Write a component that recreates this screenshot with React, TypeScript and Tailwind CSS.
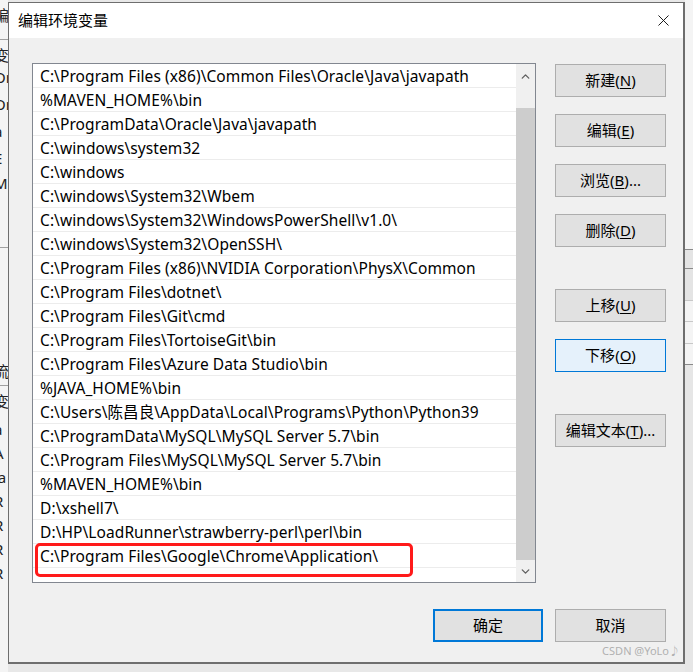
import { ChevronDown, ChevronUp, X } from "lucide-react"

const paths = [
  "C:\\Program Files (x86)\\Common Files\\Oracle\\Java\\javapath",
  "%MAVEN_HOME%\\bin",
  "C:\\ProgramData\\Oracle\\Java\\javapath",
  "C:\\windows\\system32",
  "C:\\windows",
  "C:\\windows\\System32\\Wbem",
  "C:\\windows\\System32\\WindowsPowerShell\\v1.0\\",
  "C:\\windows\\System32\\OpenSSH\\",
  "C:\\Program Files (x86)\\NVIDIA Corporation\\PhysX\\Common",
  "C:\\Program Files\\dotnet\\",
  "C:\\Program Files\\Git\\cmd",
  "C:\\Program Files\\TortoiseGit\\bin",
  "C:\\Program Files\\Azure Data Studio\\bin",
  "%JAVA_HOME%\\bin",
  "C:\\Users\\陈昌良\\AppData\\Local\\Programs\\Python\\Python39",
  "C:\\ProgramData\\MySQL\\MySQL Server 5.7\\bin",
  "C:\\Program Files\\MySQL\\MySQL Server 5.7\\bin",
  "%MAVEN_HOME%\\bin",
  "D:\\xshell7\\",
  "D:\\HP\\LoadRunner\\strawberry-perl\\perl\\bin",
  "C:\\Program Files\\Google\\Chrome\\Application\\",
]

// bits of the window behind the dialog, cut off at the left edge
const behind = [
  { h: "h-[40px]", t: "编", line: true },
  { h: "h-[22px]", t: "变", line: false },
  { h: "h-[27px]", t: "Or", line: false },
  { h: "h-[27px]", t: "Or", line: false },
  { h: "h-[27px]", t: "a", line: false },
  { h: "h-[25px]", t: "E", line: false },
  { h: "h-[80px]", t: "M", line: true },
  { h: "h-[108px]", t: "", line: false },
  { h: "h-[30px]", t: "流", line: true },
  { h: "h-[28px]", t: "变", line: false },
  { h: "h-[24px]", t: "a", line: false },
  { h: "h-[24px]", t: "A", line: false },
  { h: "h-[24px]", t: "la", line: false },
  { h: "h-[24px]", t: "R", line: false },
  { h: "h-[24px]", t: "R", line: false },
  { h: "h-[24px]", t: "R", line: false },
  { h: "h-[24px]", t: "R", line: false },
]

function Btn({ label, k, rest, focus }: { label: string; k: string; rest?: string; focus?: boolean }) {
  return (
    <div
      className={`w-[111px] h-[33px] flex items-center justify-center text-[15px] text-black border ${
        focus ? "bg-[#e5f1fb] border-[#0078d7]" : "bg-[#e1e1e1] border-[#adadad]"
      }`}
    >
      {label}(<span className="underline underline-offset-2">{k}</span>){rest}
    </div>
  )
}

export default function App() {
  return (
    <div
      className="w-[693px] h-[672px] bg-[#e8e8e8] flex overflow-hidden"
      style={{ fontFamily: '"Noto Sans", "Noto Sans CJK SC", sans-serif' }}
    >
      {/* window behind, left */}
      <div className="w-[8px] shrink-0 bg-[#f4f4f4] overflow-hidden flex flex-col text-[15px] text-[#222] leading-none">
        {behind.map((b, i) => (
          <div key={i} className={`${b.h} shrink-0 flex items-start pt-[8px] ${b.line ? "border-b border-[#a0a0a0]" : ""}`}>
            <span className="-ml-[6px] whitespace-nowrap">{b.t}</span>
          </div>
        ))}
      </div>

      {/* dialog */}
      <div className="mt-[2px] w-[677px] h-[662px] shrink-0 border border-[#6e6e6e] border-r-2 border-b-2 bg-[#f0f0f0] flex flex-col">
        <div className="h-[35px] bg-white flex items-center justify-between pl-[9px] pr-[10px]">
          <span className="text-[15px] text-black" style={{ fontFamily: '"Noto Sans CJK SC", sans-serif' }}>
            编辑环境变量
          </span>
          <X className="w-[19px] h-[19px] text-[#111]" strokeWidth={1.2} />
        </div>

        <div className="flex pl-[23px] pt-[25px]">
          {/* list */}
          <div className="w-[504px] h-[520px] border border-[#828790] bg-white flex">
            <div className="flex-1 flex flex-col overflow-hidden text-[15.5px] tracking-[0.08px] text-black">
              {paths.map((p, i) => (
                <div
                  key={i}
                  className="relative h-[24px] shrink-0 border-b border-[#ececec] flex items-center pt-[3px] pl-[7px] whitespace-nowrap"
                >
                  {p}
                  {i === paths.length - 1 && (
                    <div className="absolute left-[2px] -top-[1px] w-[378px] h-[34px] border-[3px] border-[#ff1a1a] rounded-[5px]" />
                  )}
                </div>
              ))}
            </div>
            {/* scrollbar */}
            <div className="w-[19px] shrink-0 bg-[#f0f0f0] flex flex-col items-center">
              <div className="h-[24px] flex items-center justify-center">
                <ChevronUp className="w-[13px] h-[13px] text-[#606060]" strokeWidth={2.5} />
              </div>
              <div className="w-full mt-[20px] h-[452px] bg-[#cdcdcd]" />
              <div className="flex-1 flex items-center justify-center">
                <ChevronDown className="w-[13px] h-[13px] text-[#606060]" strokeWidth={2.5} />
              </div>
            </div>
          </div>

          {/* buttons */}
          <div className="ml-[19px] flex flex-col pt-[1px]">
            <div className="flex flex-col gap-[17px]">
              <Btn label="新建" k="N" />
              <Btn label="编辑" k="E" />
              <Btn label="浏览" k="B" rest="..." />
              <Btn label="删除" k="D" />
            </div>
            <div className="mt-[42px] flex flex-col gap-[17px]">
              <Btn label="上移" k="U" />
              <Btn label="下移" k="O" focus />
            </div>
            <div className="mt-[42px]">
              <Btn label="编辑文本" k="T" rest="..." />
            </div>
          </div>
        </div>

        {/* bottom buttons */}
        <div className="flex justify-end gap-[12px] pr-[17px] mt-[26px]">
          <div className="w-[110px] h-[33px] border-2 border-[#0078d7] bg-[#e1e1e1] flex items-center justify-center text-[15px] text-black">
            确定
          </div>
          <div className="w-[111px] h-[33px] border border-[#adadad] bg-[#e1e1e1] flex items-center justify-center text-[15px] text-black">
            取消
          </div>
        </div>
        <div className="flex justify-end pr-[3px] mt-[3px]">
          <span className="text-[11px] text-[#b0b0b0] leading-none">CSDN @YoLo♪</span>
        </div>
      </div>

      {/* window behind, right */}
      <div className="flex-1 bg-[#f4f4f4] flex flex-col">
        <div className="h-[250px] border-b border-[#8a8a8a]" />
        <div className="h-[19px] border-b border-[#8a8a8a] bg-[#e4e4e4]" />
        <div className="h-[32px] border-b border-[#c8c8c8] bg-[#e4e4e4]" />
        <div className="h-[21px] border-b border-[#c8c8c8]" />
        <div className="h-[22px] border-b border-[#c8c8c8]" />
        <div className="h-[21px] border-b border-[#8a8a8a]" />
        <div className="flex-1 bg-[#e6e6e6]" />
      </div>
    </div>
  )
}
